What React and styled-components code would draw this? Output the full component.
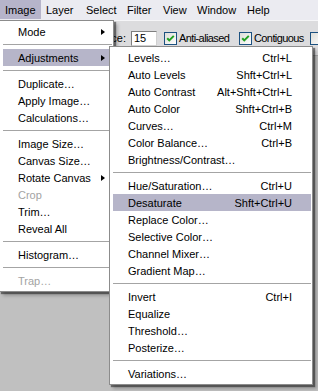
import React from "react";
import styled, { createGlobalStyle } from "styled-components";

const GlobalStyle = createGlobalStyle`
  html, body {
    margin: 0;
    padding: 0;
    background: #c0c0c0;
  }
  body {
    font-family: "Liberation Sans", Arial, sans-serif;
    font-size: 11px;
    color: #000;
  }
`;

const menuBar = [
  { label: "Image", w: 41, open: true },
  { label: "Layer", w: 40 },
  { label: "Select", w: 41 },
  { label: "Filter", w: 36 },
  { label: "View", w: 34 },
  { label: "Window", w: 50 },
  { label: "Help", w: 40 },
];

const imageMenu = [
  { label: "Mode", sub: true },
  "-",
  { label: "Adjustments", sub: true, active: true },
  "-",
  { label: "Duplicate…" },
  { label: "Apply Image…" },
  { label: "Calculations…" },
  "-",
  { label: "Image Size…" },
  { label: "Canvas Size…" },
  { label: "Rotate Canvas", sub: true },
  { label: "Crop", disabled: true },
  { label: "Trim…" },
  { label: "Reveal All" },
  "-",
  { label: "Histogram…" },
  "-",
  { label: "Trap…", disabled: true },
];

const adjustMenu = [
  { label: "Levels…", key: "Ctrl+L" },
  { label: "Auto Levels", key: "Shft+Ctrl+L" },
  { label: "Auto Contrast", key: "Alt+Shft+Ctrl+L" },
  { label: "Auto Color", key: "Shft+Ctrl+B" },
  { label: "Curves…", key: "Ctrl+M" },
  { label: "Color Balance…", key: "Ctrl+B" },
  { label: "Brightness/Contrast…" },
  "-",
  { label: "Hue/Saturation…", key: "Ctrl+U" },
  { label: "Desaturate", key: "Shft+Ctrl+U", active: true },
  { label: "Replace Color…" },
  { label: "Selective Color…" },
  { label: "Channel Mixer…" },
  { label: "Gradient Map…" },
  "-",
  { label: "Invert", key: "Ctrl+I" },
  { label: "Equalize" },
  { label: "Threshold…" },
  { label: "Posterize…" },
  "-",
  { label: "Variations…" },
];

const Screen = styled.div`
  position: relative;
  width: 318px;
  height: 391px;
  overflow: hidden;
  display: flex;
  flex-direction: column;
  background: #c0c0c0;
`;

const MenuBar = styled.div`
  height: 20px;
  display: flex;
  align-items: stretch;
  background: #ebebf1;
  flex-shrink: 0;
`;

const BarItem = styled.div`
  width: ${(p) => p.$w}px;
  flex-shrink: 0;
  padding-left: 5px;
  box-sizing: border-box;
  display: flex;
  align-items: center;
  height: 19px;
  background: ${(p) => (p.$open ? "#b6b4ca" : "transparent")};
  white-space: nowrap;
`;

const Toolbar = styled.div`
  height: 34px;
  display: flex;
  align-items: center;
  background: #dcdcde;
  border-top: 1px solid #f6f6f8;
  border-bottom: 1px solid #a8a8a8;
  flex-shrink: 0;
  white-space: nowrap;
  overflow: hidden;
  & > * {
    flex-shrink: 0;
  }
`;

const FieldLabel = styled.span`
  width: 60px;
  margin-left: 66px;
  text-align: right;
`;

const NumberBox = styled.div`
  width: 26px;
  height: 15px;
  margin-left: 5px;
  box-sizing: border-box;
  background: #fff;
  border: 1px solid #7f7f7f;
  border-right-color: #d0d0d0;
  border-bottom-color: #d0d0d0;
  padding-left: 2px;
  display: flex;
  align-items: center;
  line-height: 1;
`;

const Option = styled.div`
  width: ${(p) => p.$w}px;
  display: flex;
  align-items: center;
  gap: 2px;
  margin-left: ${(p) => p.$ml || 0}px;
  letter-spacing: -0.6px;
`;

const Workspace = styled.div`
  flex: 1;
  background: #c0c0c0;
`;

const Menu = styled.div`
  position: absolute;
  left: ${(p) => p.$x}px;
  top: ${(p) => p.$y}px;
  width: ${(p) => p.$w}px;
  box-sizing: border-box;
  background: #fff;
  border: 1px solid #8c8c8c;
  padding: 2px 1px 2px 3px;
  box-shadow: 2px 2px 1px rgba(0, 0, 0, 0.45), 4px 4px 3px rgba(0, 0, 0, 0.2);
`;

const Row = styled.div`
  height: 17px;
  display: flex;
  align-items: center;
  padding-left: 15px;
  padding-right: ${(p) => (p.$sub ? 7 : 19)}px;
  background: ${(p) => (p.$active ? "#b6b5c9" : "transparent")};
  color: ${(p) => (p.$disabled ? "#a3a3a3" : "#000")};
  white-space: nowrap;
`;

const RowLabel = styled.span`
  flex: 1;
`;

const Shortcut = styled.span`
  text-align: right;
`;

const Arrow = styled.span`
  width: 0;
  height: 0;
  border-top: 3.5px solid transparent;
  border-bottom: 3.5px solid transparent;
  border-left: 4px solid #000;
`;

const Separator = styled.div`
  height: 9px;
  display: flex;
  align-items: center;
  &::after {
    content: "";
    flex: 1;
    height: 1px;
    background: #a4a4a4;
  }
`;

function CheckBox({ checked = true }) {
  return (
    <svg width="13" height="13" viewBox="0 0 13 13">
      <defs>
        <linearGradient id="cbg" x1="0" y1="0" x2="1" y2="1">
          <stop offset="0" stopColor="#dcdcd6" />
          <stop offset="1" stopColor="#ffffff" />
        </linearGradient>
      </defs>
      <rect x="0.5" y="0.5" width="12" height="12" fill="url(#cbg)" stroke="#1c5180" />
      {checked && (
        <polyline
          points="3.2,6.2 5.3,8.4 9.8,3.9"
          fill="none"
          stroke="#21a121"
          strokeWidth="2"
        />
      )}
    </svg>
  );
}

function MenuList({ items }) {
  return items.map((it, i) =>
    it === "-" ? (
      <Separator key={i} />
    ) : (
      <Row key={i} $active={it.active} $disabled={it.disabled} $sub={it.sub}>
        <RowLabel>{it.label}</RowLabel>
        {it.key && <Shortcut>{it.key}</Shortcut>}
        {it.sub && <Arrow />}
      </Row>
    )
  );
}

export default function App() {
  return (
    <Screen>
      <GlobalStyle />
      <MenuBar>
        {menuBar.map((m) => (
          <BarItem key={m.label} $w={m.w} $open={m.open}>
            {m.label}
          </BarItem>
        ))}
      </MenuBar>
      <Toolbar>
        <FieldLabel>Tolerance:</FieldLabel>
        <NumberBox>15</NumberBox>
        <Option $w={75} $ml={7}>
          <CheckBox />
          Anti-aliased
        </Option>
        <Option $w={71}>
          <CheckBox />
          Contiguous
        </Option>
        <Option $w={13}>
          <CheckBox checked={false} />
        </Option>
      </Toolbar>
      <Workspace />
      <Menu $x={-1} $y={20} $w={115}>
        <MenuList items={imageMenu} />
      </Menu>
      <Menu $x={109} $y={46} $w={204}>
        <MenuList items={adjustMenu} />
      </Menu>
    </Screen>
  );
}
